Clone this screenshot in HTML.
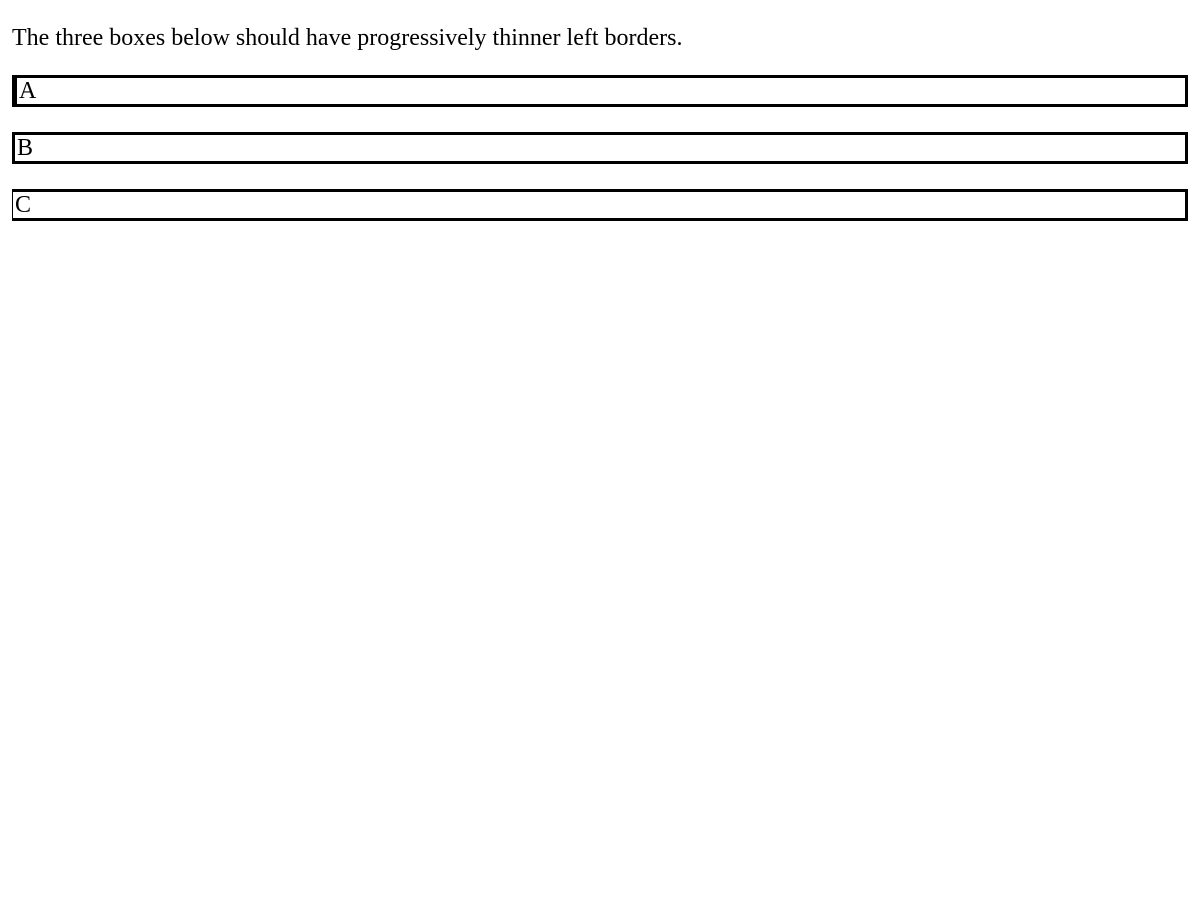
<!DOCTYPE html>
<html><head><style>
body{margin:0;font-family:"Liberation Serif",serif;font-size:24px;color:#000;background:#fff}
p{position:absolute;left:12px;top:24px;margin:0;line-height:28px}
.b{position:absolute;left:12px;width:1168px;height:26px;line-height:26px;border:3px solid #000;padding-left:2px;box-sizing:content-box}
</style></head><body>
<p>The three boxes below should have progressively thinner left borders.</p>
<div class="b" style="top:75px;border-left-width:5px;width:1166px">A</div>
<div class="b" style="top:132px;border-left-width:3px">B</div>
<div class="b" style="top:189px;border-left-width:1px;width:1170px">C</div>
</body></html>
